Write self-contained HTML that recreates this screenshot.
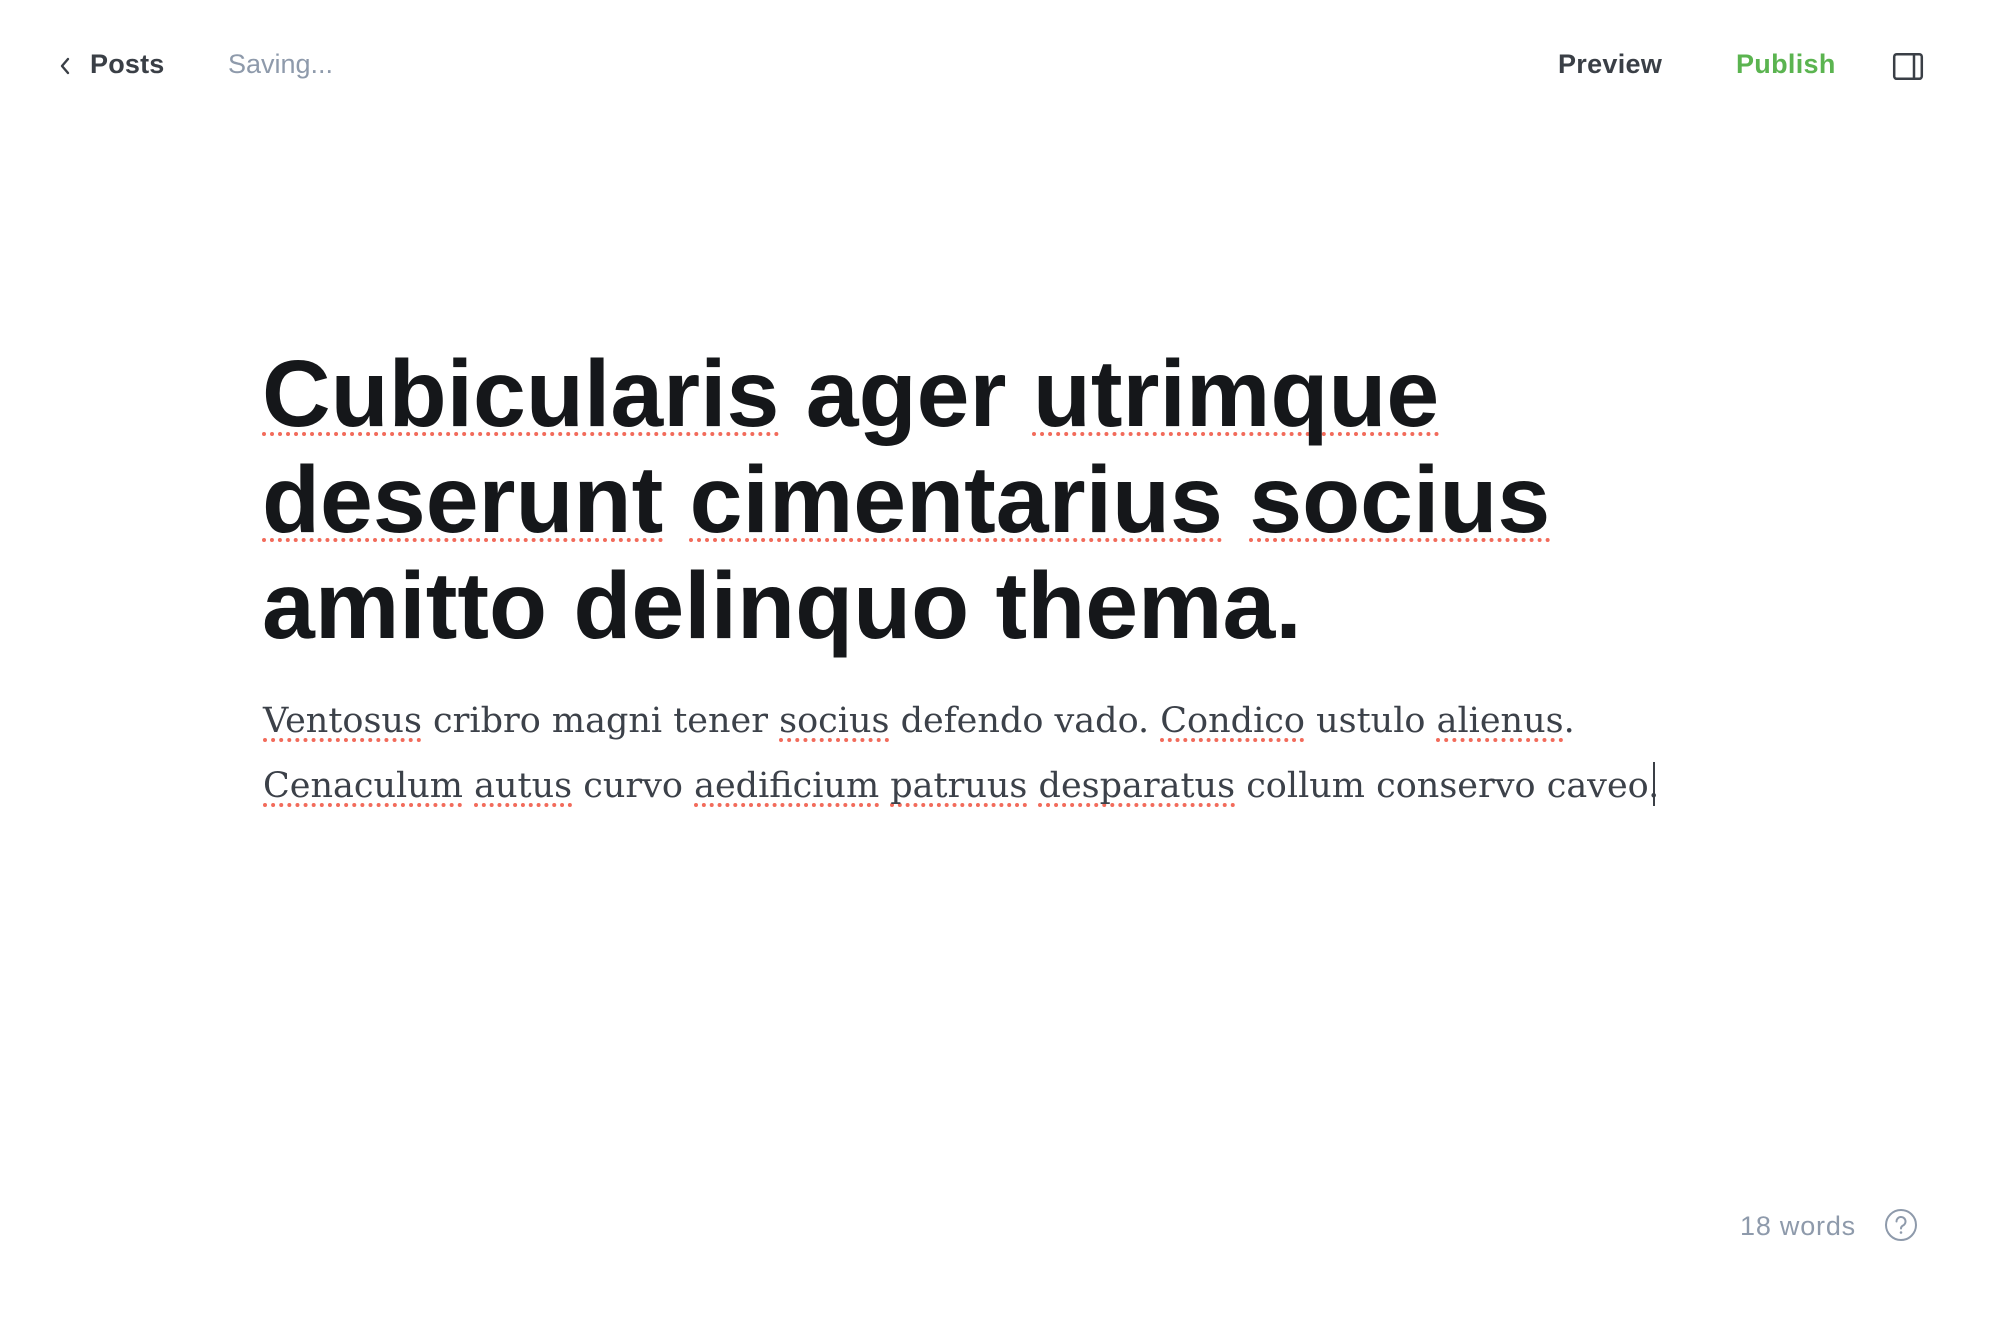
<!DOCTYPE html>
<html><head><meta charset="utf-8"><style>
html,body{margin:0;padding:0;background:#fff;width:2000px;height:1320px;overflow:hidden;position:relative}
.a{position:absolute;white-space:nowrap}
.h{font-family:"Liberation Sans",sans-serif;font-size:27px;line-height:32px;top:48px}
.t{font-family:"Liberation Sans",sans-serif;font-weight:bold;font-size:95px;line-height:106px;color:#15171a;left:262px}
.b{font-family:"DejaVu Serif","Liberation Serif",serif;font-size:35px;line-height:65px;color:#3c4149;left:263px}
.u{text-decoration:underline dotted #f26b5b;text-decoration-thickness:4px;text-underline-offset:6px;text-decoration-skip-ink:none}
</style></head><body>
<svg class="a" style="left:58px;top:56px" width="14" height="20" viewBox="0 0 14 20"><path d="M10 3 L4 10 L10 17" fill="none" stroke="#3a3f46" stroke-width="2.4" stroke-linecap="round" stroke-linejoin="round"/></svg>
<div class="a h" style="left:90px;color:#3a3f46;font-weight:bold;letter-spacing:0.2px">Posts</div>
<div class="a h" style="left:228px;color:#8e9aab">Saving...</div>
<div class="a h" style="left:1558px;color:#3a3f46;font-weight:bold;letter-spacing:0.3px">Preview</div>
<div class="a h" style="left:1736px;color:#5bb450;font-weight:bold;letter-spacing:0.3px">Publish</div>
<svg class="a" style="left:1890px;top:50px" width="36" height="32" viewBox="0 0 36 32"><rect x="4.2" y="4.2" width="27.6" height="24.6" rx="2.5" fill="none" stroke="#3a3f46" stroke-width="2.5"/><line x1="24" y1="4" x2="24" y2="29" stroke="#3a3f46" stroke-width="2.5"/></svg>

<div class="a t" style="top:341px"><span class="u">Cubicularis</span> ager <span class="u">utrimque</span></div>
<div class="a t" style="top:447px"><span class="u">deserunt</span> <span class="u">cimentarius</span> <span class="u">socius</span></div>
<div class="a t" style="top:553px">amitto delinquo thema.</div>

<div class="a b" style="top:689px"><span class="u">Ventosus</span> cribro magni tener <span class="u">socius</span> defendo vado. <span class="u">Condico</span> ustulo <span class="u">alienus</span>.</div>
<div class="a b" style="top:754px"><span class="u">Cenaculum</span> <span class="u">autus</span> curvo <span class="u">aedificium</span> <span class="u">patruus</span> <span class="u">desparatus</span> collum conservo caveo.</div>
<div class="a" style="left:1653px;top:762px;width:2px;height:44px;background:#3a3f46"></div>

<div class="a" style="left:1740px;top:1210px;font-family:'Liberation Sans',sans-serif;font-size:27px;line-height:32px;color:#8e9aab;letter-spacing:0.8px">18 words</div>
<svg class="a" style="left:1884px;top:1208px" width="34" height="34" viewBox="0 0 34 34"><circle cx="17" cy="17" r="15" fill="none" stroke="#8e9aab" stroke-width="2"/><path d="M12.5 13.5 a4.5 4.5 0 1 1 6.5 4 c-1.5 0.8 -2 1.6 -2 3" fill="none" stroke="#8e9aab" stroke-width="2" stroke-linecap="round"/><circle cx="17" cy="24.5" r="1.3" fill="#8e9aab"/></svg>
</body></html>
